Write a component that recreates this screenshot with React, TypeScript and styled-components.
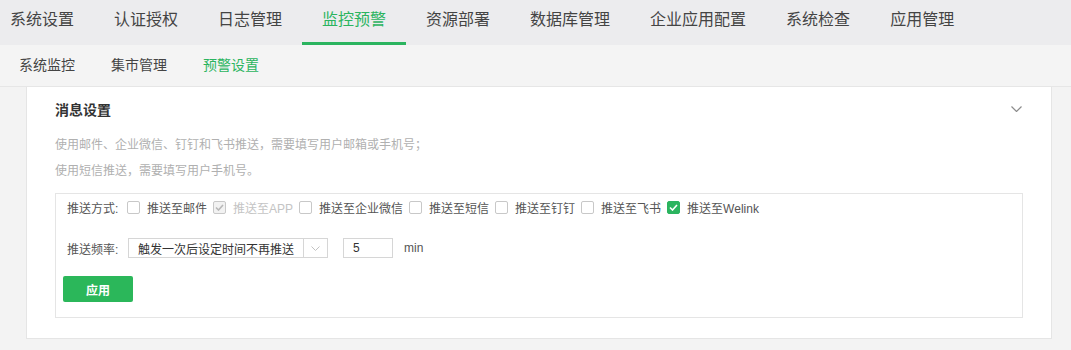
import React, { FC } from 'react';
import styled, { createGlobalStyle } from 'styled-components';

const GREEN = '#2bb45f';

const GlobalStyle = createGlobalStyle`
  * { box-sizing: border-box; }
  body {
    margin: 0;
    background: #f3f3f3;
    font-family: "Liberation Sans", "Noto Sans CJK SC", sans-serif;
    color: #333333;
  }
`;

const Page = styled.div`
  width: 1071px;
  height: 350px;
  overflow: hidden;
  background: #f3f3f3;
`;

const TopNav = styled.nav`
  height: 45px;
  background: #ececee;
  display: flex;
  padding-left: 0;
`;

const TopTab = styled.div<{ $active?: boolean }>`
  height: 45px;
  padding: 0 20px;
  font-size: 16px;
  line-height: 40px;
  color: ${(p) => (p.$active ? GREEN : '#444444')};
  border-bottom: 3px solid ${(p) => (p.$active ? GREEN : 'transparent')};
  white-space: nowrap;

  &:first-child {
    padding-left: 10px;
  }
`;

const SubNav = styled.nav`
  height: 42px;
  background: #f4f4f4;
  border-bottom: 1px solid #e6e6e6;
  display: flex;
  padding-left: 1px;
`;

const SubTab = styled.div<{ $active?: boolean }>`
  padding: 0 18px;
  font-size: 14px;
  line-height: 41px;
  color: ${(p) => (p.$active ? GREEN : '#444444')};
`;

const Card = styled.section`
  margin: 0 19px 0 26px;
  height: 252px;
  background: #ffffff;
  border: 1px solid #e5e5e5;
  border-top: none;
  padding: 13px 28px 20px 28px;
`;

const CardHead = styled.div`
  display: flex;
  align-items: center;
  justify-content: space-between;
  height: 20px;
`;

const CardTitle = styled.h3`
  margin: 0;
  font-size: 14px;
  font-weight: 700;
  line-height: 20px;
  color: #333333;
`;

const Collapse = styled.svg`
  width: 11px;
  height: 6px;
  margin-right: 1px;
  margin-top: -2px;
`;

const Notes = styled.div`
  margin-top: 12px;
  font-size: 12px;
  line-height: 26px;
  color: #b0b0b0;
`;

const SettingsBox = styled.div`
  margin-top: 9px;
  border: 1px solid #e5e5e5;
  padding: 3px 7px 14px 7px;
  height: 125px;
`;

const Row = styled.div<{ $gap?: number }>`
  display: flex;
  align-items: center;
  height: 20px;
  margin-top: ${(p) => p.$gap ?? 0}px;
  font-size: 12px;
`;

const RowLabel = styled.span`
  width: 60px;
  margin-left: 4px;
  color: #555555;
  white-space: nowrap;
`;

const Option = styled.label<{ $disabled?: boolean }>`
  display: flex;
  align-items: center;
  margin-right: 6px;
  color: ${(p) => (p.$disabled ? '#c4c4c4' : '#555555')};
  white-space: nowrap;
`;

const Box = styled.span<{ $state: 'off' | 'on' | 'disabled' }>`
  width: 13px;
  height: 13px;
  margin-right: 7px;
  border-radius: 2px;
  display: flex;
  align-items: center;
  justify-content: center;
  border: 1px solid ${(p) => (p.$state === 'on' ? GREEN : '#c8c8c8')};
  background: ${(p) =>
    p.$state === 'on' ? GREEN : p.$state === 'disabled' ? '#f2f2f2' : '#ffffff'};
`;

const Tick = styled.svg`
  width: 9px;
  height: 7px;
`;

const Select = styled.div`
  width: 200px;
  height: 20px;
  margin-left: 1px;
  border: 1px solid #d6d6d6;
  display: flex;
  align-items: center;
`;

const SelectValue = styled.span`
  flex: 1;
  padding-left: 9px;
  color: #333333;
  white-space: nowrap;
`;

const SelectArrow = styled.span`
  width: 24px;
  height: 100%;
  border-left: 1px solid #d6d6d6;
  display: flex;
  align-items: center;
  justify-content: center;
`;

const NumberInput = styled.div`
  width: 50px;
  height: 20px;
  margin-left: 15px;
  border: 1px solid #d6d6d6;
  padding-left: 9px;
  line-height: 18px;
  color: #333333;
`;

const Unit = styled.span`
  margin-left: 11px;
  color: #555555;
`;

const ApplyButton = styled.button`
  display: block;
  margin-top: 18px;
  width: 70px;
  height: 26px;
  border: none;
  border-radius: 2px;
  background: #2bb75a;
  color: #ffffff;
  font-family: inherit;
  font-size: 12px;
  font-weight: 700;
  cursor: pointer;
`;

const topTabs = ['系统设置', '认证授权', '日志管理', '监控预警', '资源部署', '数据库管理', '企业应用配置', '系统检查', '应用管理'];
const subTabs = ['系统监控', '集市管理', '预警设置'];

type Channel = { label: string; state: 'off' | 'on' | 'disabled' };
const channels: Channel[] = [
  { label: '推送至邮件', state: 'off' },
  { label: '推送至APP', state: 'disabled' },
  { label: '推送至企业微信', state: 'off' },
  { label: '推送至短信', state: 'off' },
  { label: '推送至钉钉', state: 'off' },
  { label: '推送至飞书', state: 'off' },
  { label: '推送至Welink', state: 'on' },
];

const Checkbox: FC<{ state: Channel['state'] }> = ({ state }) => (
  <Box $state={state}>
    {state !== 'off' && (
      <Tick viewBox="0 0 9 7">
        <polyline
          points="1,3.5 3.5,6 8,1"
          fill="none"
          stroke={state === 'on' ? '#ffffff' : '#b8b8b8'}
          strokeWidth="1.6"
        />
      </Tick>
    )}
  </Box>
);

const App: FC = () => (
  <Page>
    <GlobalStyle />
    <TopNav>
      {topTabs.map((t) => (
        <TopTab key={t} $active={t === '监控预警'}>{t}</TopTab>
      ))}
    </TopNav>
    <SubNav>
      {subTabs.map((t) => (
        <SubTab key={t} $active={t === '预警设置'}>{t}</SubTab>
      ))}
    </SubNav>
    <Card>
      <CardHead>
        <CardTitle>消息设置</CardTitle>
        <Collapse viewBox="0 0 11 6">
          <polyline points="0.5,0.5 5.5,5.5 10.5,0.5" fill="none" stroke="#8c8c8c" strokeWidth="1.2" />
        </Collapse>
      </CardHead>
      <Notes>
        <div>使用邮件、企业微信、钉钉和飞书推送，需要填写用户邮箱或手机号；</div>
        <div>使用短信推送，需要填写用户手机号。</div>
      </Notes>
      <SettingsBox>
        <Row>
          <RowLabel>推送方式:</RowLabel>
          {channels.map((c) => (
            <Option key={c.label} $disabled={c.state === 'disabled'}>
              <Checkbox state={c.state} />
              {c.label}
            </Option>
          ))}
        </Row>
        <Row $gap={21}>
          <RowLabel>推送频率:</RowLabel>
          <Select>
            <SelectValue>触发一次后设定时间不再推送</SelectValue>
            <SelectArrow>
              <svg width="9" height="5" viewBox="0 0 9 5">
                <polyline points="0.5,0.5 4.5,4.5 8.5,0.5" fill="none" stroke="#c2c2c2" strokeWidth="1" />
              </svg>
            </SelectArrow>
          </Select>
          <NumberInput>5</NumberInput>
          <Unit>min</Unit>
        </Row>
        <ApplyButton>应用</ApplyButton>
      </SettingsBox>
    </Card>
  </Page>
);

export default App;
